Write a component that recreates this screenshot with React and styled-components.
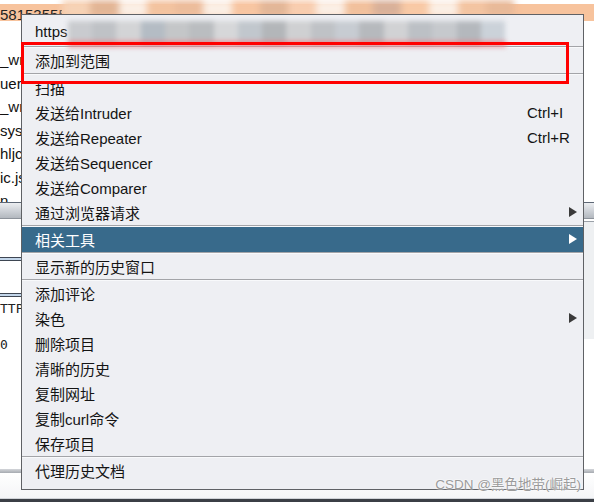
import React from "react";
import styled, { createGlobalStyle } from "styled-components";

const GlobalStyle = createGlobalStyle`
  html, body {
    margin: 0;
    padding: 0;
    background: #ffffff;
  }
  #root {
    width: 594px;
    height: 502px;
  }
`;

const SANS = `"Liberation Sans", "Noto Sans CJK SC", Arial, sans-serif`;

const Screen = styled.div`
  position: relative;
  width: 594px;
  height: 502px;
  overflow: hidden;
  font-family: ${SANS};
  background: #ffffff;
`;

/* ---------- window behind the popup ---------- */

const Backdrop = styled.div`
  display: flex;
  flex-direction: column;
  width: 100%;
  height: 100%;
`;

const Gap = styled.div`
  height: ${(p) => p.$h}px;
  flex: none;
  background: ${(p) => p.$bg || "transparent"};
`;

const SelectedRow = styled.div`
  height: 17px;
  flex: none;
  background: #f7c39d;
  font-size: 15px;
  line-height: 22px;
  color: #222;
  overflow: hidden;
  white-space: nowrap;
`;

const Clip = styled.span`
  display: block;
  width: ${(p) => p.$w || 22}px;
  overflow: hidden;
  white-space: nowrap;
`;

const TableRow = styled.div`
  height: ${(p) => p.$h || 23.5}px;
  flex: none;
  overflow: hidden;
  font-size: 15px;
  line-height: 23.5px;
  color: #111;
`;

const HeaderBar = styled.div`
  height: 15px;
  flex: none;
  border-top: 1px solid #5d6775;
  background: linear-gradient(#eceef1, #c9cdd3 60%, #b3b8bf);
  border-bottom: 1px solid #8d939b;
`;

const Pane = styled.div`
  flex: none;
  height: 250px;
  display: grid;
  grid-template-columns: 300px 1fr;
`;

const PaneLeft = styled.div`
  display: flex;
  flex-direction: column;
  background: #ffffff;
`;

const PaneRight = styled.div`
  display: flex;
  flex-direction: column;
`;

const Tint = styled.div`
  height: ${(p) => p.$h}px;
  flex: none;
  background: ${(p) => p.$bg};
  border-top: ${(p) => (p.$line ? "1px solid #9aa0a8" : "none")};
`;

const TabLine = styled.div`
  height: 2px;
  flex: none;
  border-top: 1px solid #3e4652;
  border-bottom: 1px solid #3e4652;
  background: #c3d6ea;
`;

const Mono = styled.div`
  font-family: "DejaVu Sans Mono", "Liberation Mono", monospace;
  font-size: 13px;
  line-height: 14px;
  color: #222;
  height: ${(p) => p.$h}px;
  flex: none;
  overflow: hidden;
`;

const BottomLine = styled.div`
  height: 4px;
  flex: none;
  background: linear-gradient(#d4d6da, #a6aab0);
`;

const BottomBand = styled.div`
  flex: 1;
  background: linear-gradient(#ffffff 0, #f4f5f7 85%, #d0d3d8 88%, #3b3f46 90%);
`;

/* ---------- popup menu ---------- */

const Menu = styled.div`
  position: absolute;
  left: 21px;
  top: 14px;
  width: 563px;
  box-sizing: border-box;
  border: 1px solid #5f6165;
  background: #eeeff3;
  padding: 3px 0 6px;
  display: flex;
  flex-direction: column;
`;

const Item = styled.div`
  display: flex;
  align-items: center;
  box-sizing: border-box;
  height: ${(p) => p.$h || 25}px;
  padding: 0 6px 1px 13px;
  font-size: 15px;
  color: ${(p) => (p.$active ? "#ffffff" : "#141414")};
  background: ${(p) => (p.$active ? "#386a8b" : "transparent")};
  white-space: nowrap;
`;

const Label = styled.span`
  flex: 1;
  display: flex;
  align-items: center;
`;

const Shortcut = styled.span`
  width: 50px;
  display: flex;
  justify-content: ${(p) => (p.$arrow ? "flex-end" : "flex-start")};
  align-items: center;
`;

const Separator = styled.div`
  height: 0;
  border-top: 1px solid #a3a4a8;
  border-bottom: 1px solid #f8f9fb;
`;

const Censor = styled.span`
  display: inline-flex;
  width: ${(p) => p.$w}px;
  height: ${(p) => p.$hgt}px;
  filter: blur(2.5px);
  position: relative;
  top: ${(p) => p.$top || 0}px;
  &::after {
    content: "";
    position: absolute;
    left: 0;
    right: 0;
    bottom: 0;
    height: 6px;
    background: rgba(236, 120, 125, 0.75);
  }
`;

const Tile = styled.span`
  flex: 1;
  background: ${(p) => p.$c};
`;

const Arrow = ({ color }) => (
  <svg width="8" height="10" viewBox="0 0 8 10">
    <path d="M0 0 L8 5 L0 10 Z" fill={color} />
  </svg>
);

const TopCensor = styled.div`
  position: absolute;
  left: 62px;
  top: 0;
  width: 452px;
  height: 17px;
  display: flex;
  filter: blur(3.5px);
`;

const RedFrame = styled.div`
  position: absolute;
  left: 21px;
  top: 42px;
  width: 548px;
  height: 42px;
  box-sizing: border-box;
  border: 3px solid #ff0000;
  pointer-events: none;
`;

const Watermark = styled.div`
  position: absolute;
  right: 13px;
  bottom: 9px;
  font-size: 13.5px;
  color: #9b9b9b;
  white-space: nowrap;
  text-shadow: 0 0 2px #ffffff, 0 0 2px #ffffff;
`;

const urlTiles = [
  "#c9cbcf", "#bfc2c6", "#d3d4d6", "#b4bcc4", "#c4c6c8", "#babdc0",
  "#d6d7d9", "#c1c7cd", "#b3b6b9", "#cfd0d2", "#bfc2c6", "#c7ccd2",
  "#b6b9bd", "#d1d2d4", "#bcc0c5", "#c6c9cd", "#b4b8bd", "#cbd2d9",
];

const topTiles = [
  "#f6d2b6", "#e2b596", "#fbefe6", "#f3c3a0", "#ecbc9c", "#fbefe6",
  "#f7c5a2", "#e2b698", "#f8cdb0", "#fbefe6", "#f1c09d", "#d8b09a",
  "#f8c9a6", "#fbefe6", "#f3c4a2", "#e8b999",
];

const tableTexts = ["_write", "uery", "_write", "system", "hljcode", "ic.js"];

const menuItems = [
  { label: "添加到范围" },
  "sep",
  { label: "扫描" },
  { label: "发送给Intruder", shortcut: "Ctrl+I" },
  { label: "发送给Repeater", shortcut: "Ctrl+R" },
  { label: "发送给Sequencer" },
  { label: "发送给Comparer" },
  { label: "通过浏览器请求", sub: true },
  "sep",
  { label: "相关工具", sub: true, active: true },
  "sep",
  { label: "显示新的历史窗口" },
  "sep",
  { label: "添加评论" },
  { label: "染色", sub: true },
  { label: "删除项目" },
  { label: "清晰的历史" },
  { label: "复制网址" },
  { label: "复制curl命令" },
  { label: "保存项目" },
  "sep",
  { label: "代理历史文档" },
];

const App = () => {
  return (
    <>
      <GlobalStyle />
      <Screen>
        <Backdrop>
          <Gap $h={4} />
          <SelectedRow>
            <Clip $w={62}>58153555555</Clip>
          </SelectedRow>
          <Gap $h={27} />
          {tableTexts.map((t, i) => (
            <TableRow key={i}>
              <Clip>{t}</Clip>
            </TableRow>
          ))}
          <TableRow $h={13}>
            <Clip>n</Clip>
          </TableRow>
          <HeaderBar />
          <Pane>
            <PaneLeft>
              <Gap $h={38} />
              <TabLine />
              <Gap $h={32} />
              <TabLine />
              <Gap $h={5} />
              <Mono $h={36}>
                <Clip $w={21}>TTP/1.1</Clip>
              </Mono>
              <Mono $h={14}>
                <Clip $w={21}>0</Clip>
              </Mono>
            </PaneLeft>
            <PaneRight>
              <Tint $h={2} $bg="#ffffff" />
              <Tint $h={117} $bg="#eef0f2" $line />
              <Tint $h={131} $bg="#ffffff" />
            </PaneRight>
          </Pane>
          <BottomLine />
          <BottomBand />
        </Backdrop>

        <TopCensor>
          {topTiles.map((c, i) => (
            <Tile key={i} $c={c} />
          ))}
        </TopCensor>

        <Menu>
          <Item $h={28}>
            <Label>
              https
              <Censor $w={438} $hgt={26} $top={2}>
                {urlTiles.map((c, i) => (
                  <Tile key={i} $c={c} />
                ))}
              </Censor>
            </Label>
          </Item>
          <Separator />
          {menuItems.map((it, i) =>
            it === "sep" ? (
              <Separator key={i} />
            ) : (
              <Item key={i} $active={it.active}>
                <Label>{it.label}</Label>
                <Shortcut $arrow={it.sub}>
                  {it.shortcut}
                  {it.sub && <Arrow color={it.active ? "#ffffff" : "#3a3a3a"} />}
                </Shortcut>
              </Item>
            )
          )}
        </Menu>

        <RedFrame />
        <Watermark>CSDN @黑色地带(崛起)</Watermark>
      </Screen>
    </>
  );
};

export default App;
